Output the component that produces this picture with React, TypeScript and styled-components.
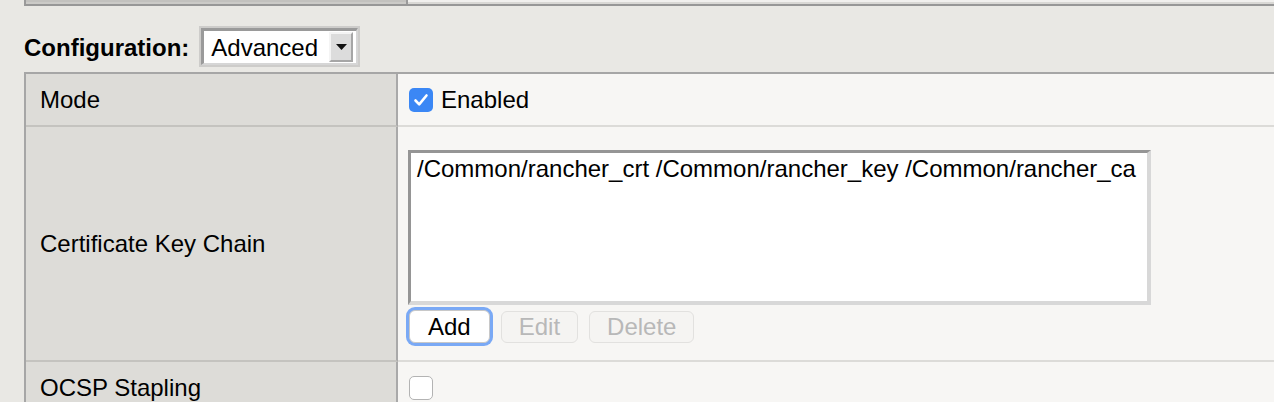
import styled, { createGlobalStyle } from 'styled-components';

const GlobalStyle = createGlobalStyle`
  html, body {
    margin: 0;
    padding: 0;
    background: #e9e8e4;
    overflow: hidden;
  }
  body {
    font-family: "Liberation Sans", Arial, Helvetica, sans-serif;
    color: #000;
  }
`;

function App() {
  return (
    <>
      <GlobalStyle />
      <StyledPage>
        <StyledPrevTable>
          <StyledPrevLeft />
          <StyledPrevRight />
        </StyledPrevTable>

        <StyledConfigRow>
          <StyledConfigLabel>Configuration:</StyledConfigLabel>
          <StyledSelect>
            <StyledSelectInner>
              <StyledSelectValue>Advanced</StyledSelectValue>
              <StyledSelectArrow>
                <svg width="11" height="6" viewBox="0 0 11 6">
                  <path d="M0 0 H11 L5.5 6 Z" fill="#111" />
                </svg>
              </StyledSelectArrow>
            </StyledSelectInner>
          </StyledSelect>
        </StyledConfigRow>

        <StyledTable>
          <StyledRow>
            <StyledLabelCell>Mode</StyledLabelCell>
            <StyledValueCell>
              <StyledCheckLabel>
                <StyledCheckbox checked>
                  <svg width="24" height="24" viewBox="0 0 24 24">
                    <path d="M6.5 12.5 L10.2 16.3 L17.5 7.5" fill="none" stroke="#fff" strokeWidth="2.6" strokeLinecap="round" strokeLinejoin="round" />
                  </svg>
                </StyledCheckbox>
                Enabled
              </StyledCheckLabel>
            </StyledValueCell>
          </StyledRow>

          <StyledRow>
            <StyledLabelCell>Certificate Key Chain</StyledLabelCell>
            <StyledValueCell className='stacked'>
              <StyledListBox>
                <StyledListItem>/Common/rancher_crt /Common/rancher_key /Common/rancher_ca</StyledListItem>
              </StyledListBox>
              <StyledButtonRow>
                <StyledButton focused>Add</StyledButton>
                <StyledButton disabled>Edit</StyledButton>
                <StyledButton disabled>Delete</StyledButton>
              </StyledButtonRow>
            </StyledValueCell>
          </StyledRow>

          <StyledRow>
            <StyledLabelCell>OCSP Stapling</StyledLabelCell>
            <StyledValueCell>
              <StyledCheckbox />
            </StyledValueCell>
          </StyledRow>
        </StyledTable>
      </StyledPage>
    </>
  );
}

export default App;

const StyledPage = styled.main`
  padding-left: 24px;
  width: 1320px;
`;

const StyledPrevTable = styled.div`
  display: grid;
  grid-template-columns: 382px 1fr;
  height: 4px;
  border-left: 2px solid #9a9a9a;
  border-bottom: 2px solid #979797;
`;

const StyledPrevLeft = styled.div`
  background: linear-gradient(#c2c1be 0 2px, #cbcac7 2px);
  border-right: 2px solid #9a9a9a;
`;

const StyledPrevRight = styled.div`
  background: linear-gradient(#f1f0ee 0 2px, #d9d8d5 2px);
`;

const StyledConfigRow = styled.div`
  display: flex;
  align-items: baseline;
  gap: 10px;
  margin-top: 20px;
  height: 41px;
`;

const StyledConfigLabel = styled.span`
  font-size: 24px;
  font-weight: bold;
`;

const StyledSelect = styled.div`
  box-sizing: border-box;
  width: 161px;
  height: 41px;
  border: 2px solid #cdccca;
  background: #fff;
  display: flex;
`;

const StyledSelectInner = styled.div`
  flex: 1;
  display: flex;
  align-items: center;
  justify-content: space-between;
  border-style: solid;
  border-width: 3px 2px 2px 3px;
  border-color: #9a9a9a #d6d6d6 #d6d6d6 #9a9a9a;
  padding: 0 3px 0 7px;
`;

const StyledSelectValue = styled.span`
  font-size: 24px;
  line-height: 27px;
`;

const StyledSelectArrow = styled.span`
  box-sizing: border-box;
  width: 24px;
  height: 30px;
  display: flex;
  align-items: center;
  justify-content: center;
  background: #dcdcdc;
  border: 2px solid;
  border-color: #f4f4f4 #a6a6a6 #a6a6a6 #f4f4f4;
`;

const StyledTable = styled.div`
  margin-top: 5px;
  border-top: 2px solid #a6a6a6;
  border-left: 2px solid #a6a6a6;
`;

const StyledRow = styled.div`
  display: grid;
  grid-template-columns: 372px 1fr;
`;

const StyledLabelCell = styled.div`
  background: #dddcd8;
  border-right: 2px solid #a9a9a9;
  border-bottom: 2px solid #c4c3bf;
  min-height: 51px;
  padding-left: 14px;
  display: flex;
  align-items: center;
  font-size: 24px;
`;

const StyledValueCell = styled.div`
  background: #f7f6f4;
  border-bottom: 2px solid #dcdbd8;
  padding-left: 11px;
  display: flex;
  align-items: center;
  font-size: 24px;

  &.stacked {
    flex-direction: column;
    align-items: flex-start;
    padding: 23px 0 17px 10px;
  }
`;

const StyledCheckLabel = styled.label`
  display: flex;
  align-items: center;
  gap: 8px;
`;

const StyledCheckbox = styled.span<{ checked?: boolean }>`
  box-sizing: border-box;
  width: 24px;
  height: 24px;
  border-radius: 5px;
  display: flex;
  align-items: center;
  justify-content: center;
  background: ${({ checked }) => (checked ? '#3b87f5' : '#fff')};
  border: ${({ checked }) => (checked ? 'none' : '1px solid #b3b3b3')};
`;

const StyledListBox = styled.div`
  box-sizing: border-box;
  width: 743px;
  height: 155px;
  background: #fff;
  border-style: solid;
  border-width: 3px 4px 4px 3px;
  border-color: #959595 #d8d8d8 #d8d8d8 #959595;
  padding: 2px 6px;
`;

const StyledListItem = styled.div`
  font-size: 24px;
  line-height: 27px;
  white-space: nowrap;
`;

const StyledButtonRow = styled.div`
  display: flex;
  gap: 11px;
  margin-top: 5px;
  padding-left: 1px;
`;

const StyledButton = styled.button<{ focused?: boolean }>`
  box-sizing: border-box;
  height: 33px;
  padding: 0 18px;
  font-family: "Liberation Sans", Arial, sans-serif;
  font-size: 24px;
  line-height: 1;
  border-radius: 6px;
  background: #fff;
  color: #000;
  border: 1px solid #c8c8c8;
  box-shadow: ${({ focused }) => (focused ? '0 0 0 3px #7aa9f5' : 'none')};

  &:disabled {
    padding: 0 17px;
    background: #f5f4f2;
    color: #b8b8b8;
    border-color: #e2e1df;
    margin-top: 1px;
    height: 32px;
  }
`;
